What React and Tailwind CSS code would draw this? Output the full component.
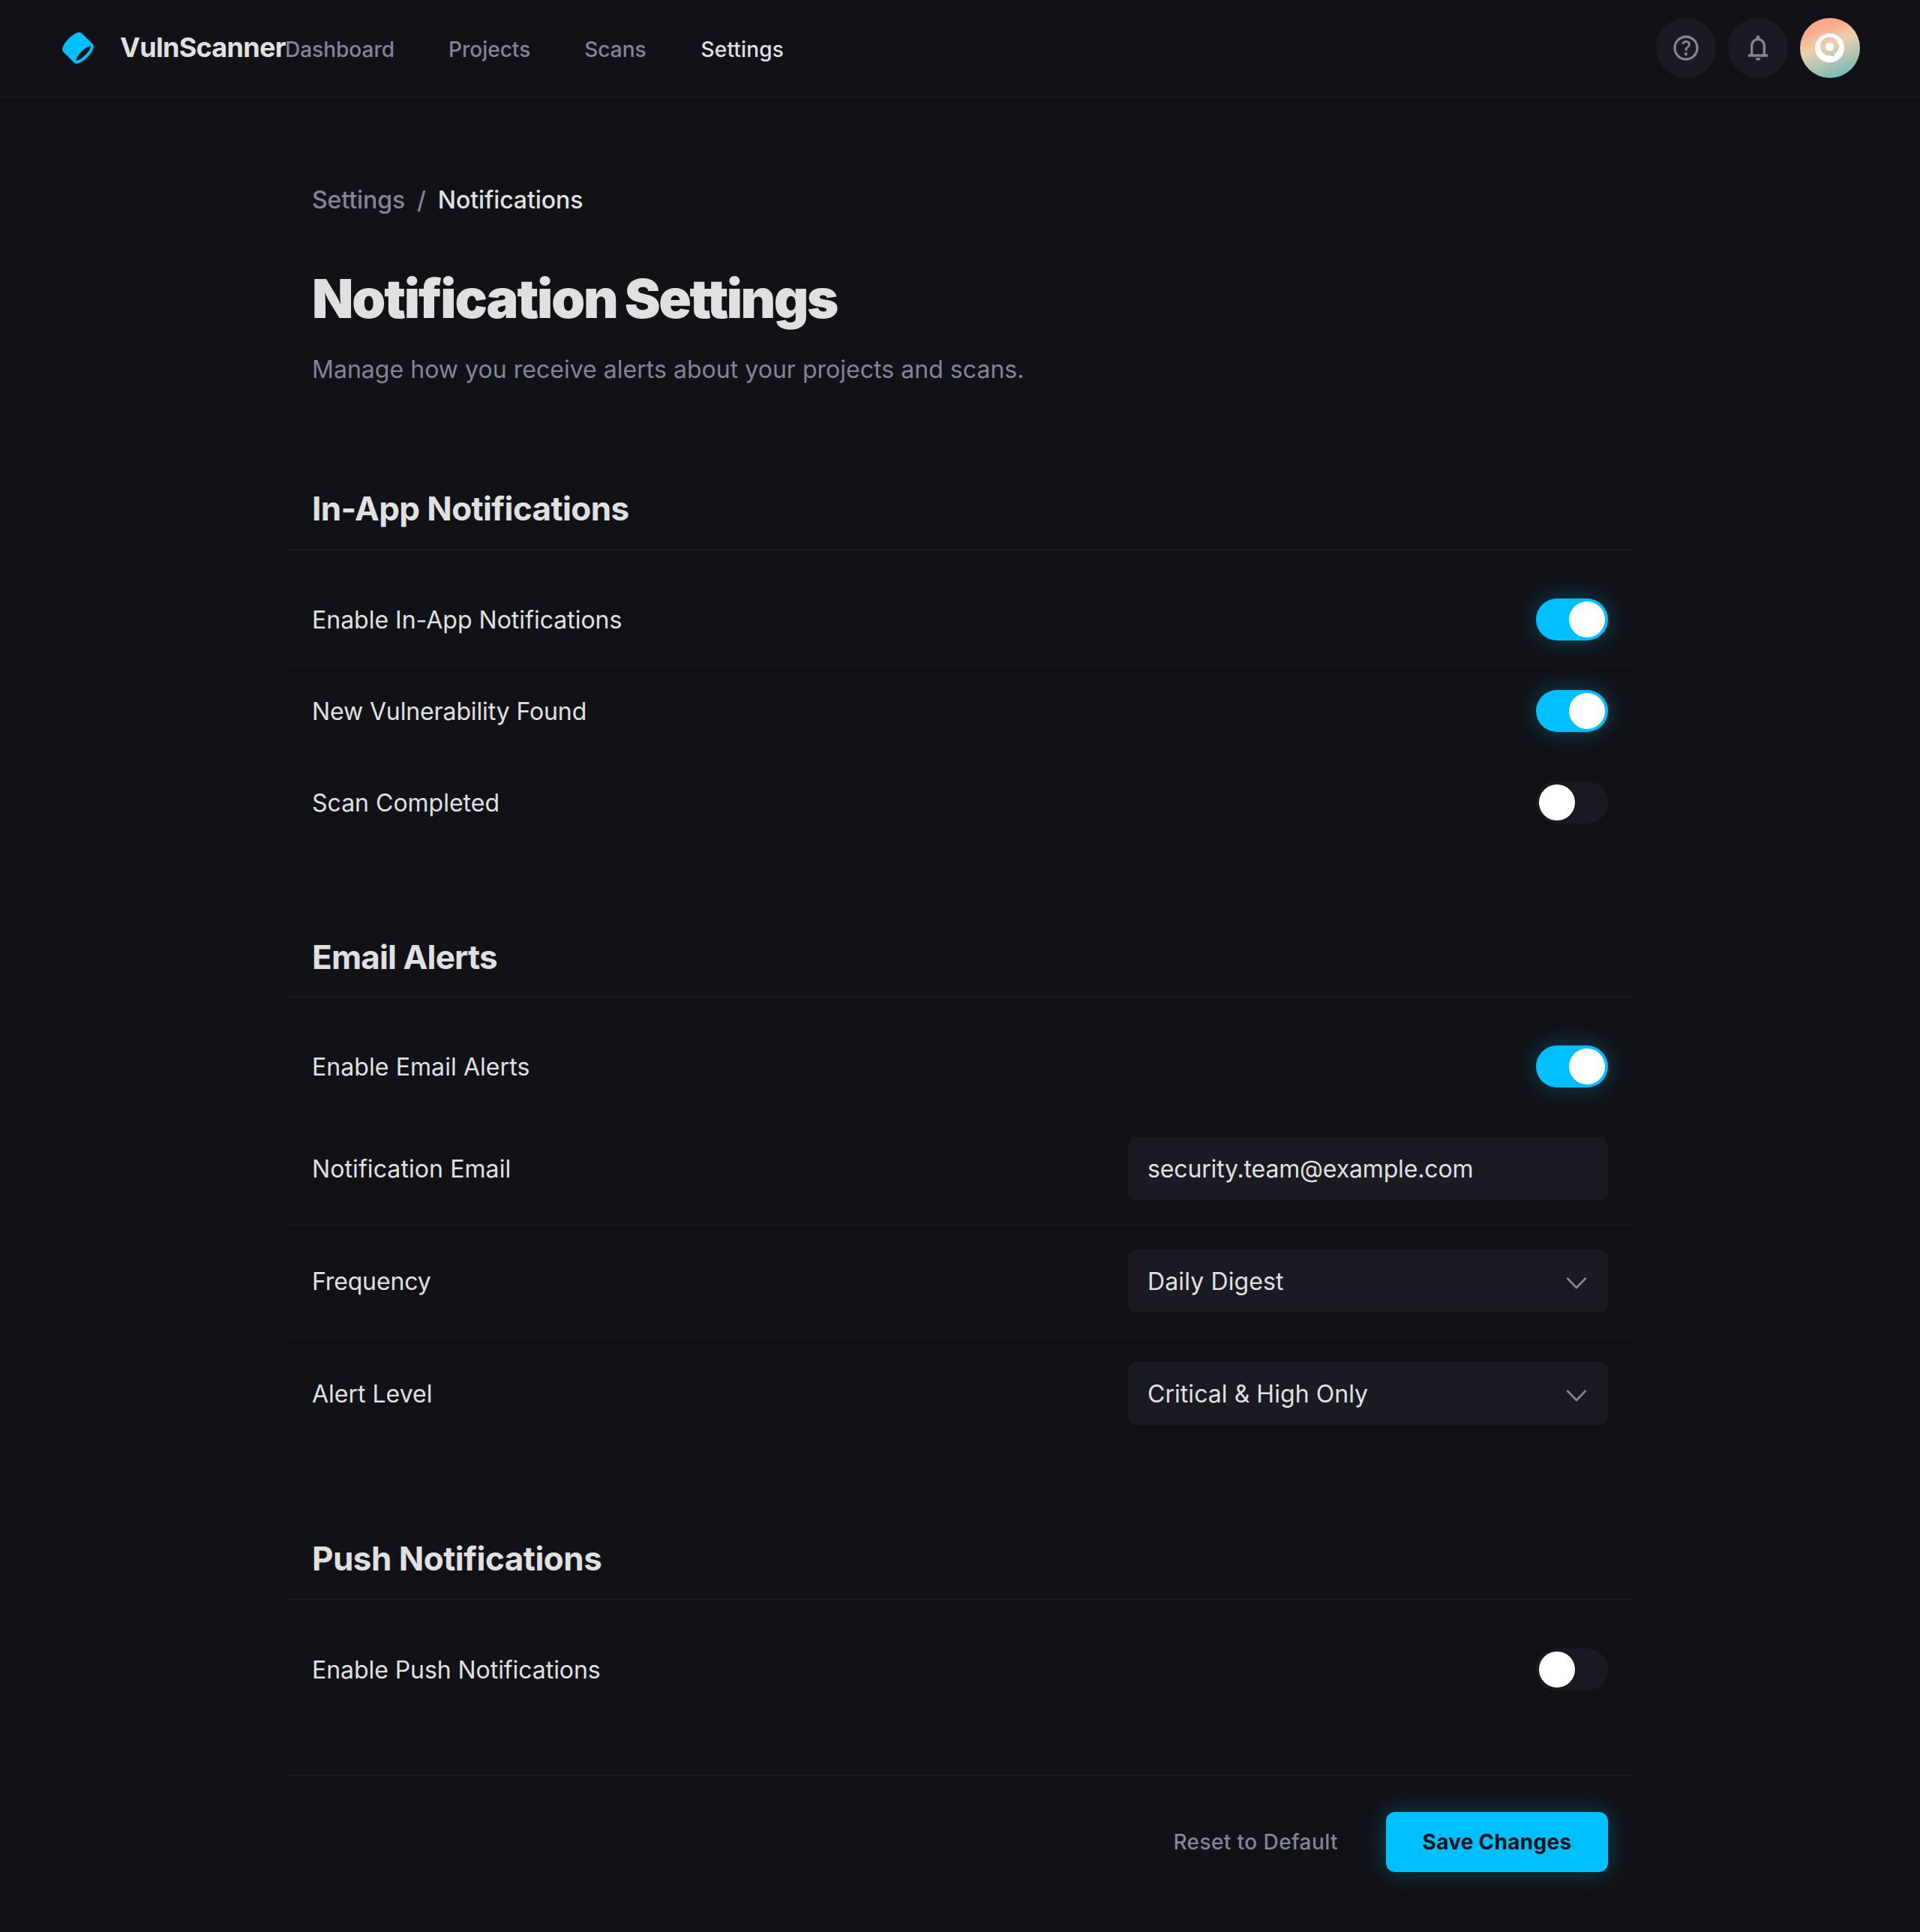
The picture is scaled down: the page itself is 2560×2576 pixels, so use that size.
const NAV = ['Dashboard', 'Projects', 'Scans', 'Settings'];

function Logo() {
  return (
    <svg viewBox="0 0 48 48" className="size-12 shrink-0 text-[#00bfff]" fill="none">
      <path
        fill="currentColor"
        fillRule="evenodd"
        clipRule="evenodd"
        d="M39.475 21.6262C40.358 21.4363 40.6863 21.5589 40.7581 21.5934C40.7876 21.655 40.8547 21.857 40.8082 22.3336C40.7408 23.0255 40.4502 24.0046 39.8572 25.2301C38.6799 27.6631 36.5085 30.6631 33.5858 33.5858C30.6631 36.5085 27.6632 38.6799 25.2301 39.8572C24.0046 40.4502 23.0255 40.7407 22.3336 40.8082C21.8571 40.8547 21.6551 40.7875 21.5934 40.7581C21.5589 40.6863 21.4363 40.358 21.6262 39.475C21.8562 38.4054 22.4689 36.9657 23.5038 35.2817C24.7575 33.2417 26.5497 30.9744 28.7621 28.762C30.9744 26.5497 33.2417 24.7574 35.2817 23.5037C36.9657 22.4689 38.4054 21.8562 39.475 21.6262ZM4.41189 29.2403L18.7597 43.5881C19.8813 44.7097 21.4027 44.9179 22.7217 44.7893C24.0585 44.659 25.5148 44.1631 26.9723 43.4579C29.9052 42.0387 33.2618 39.5667 36.4142 36.4142C39.5667 33.2618 42.0387 29.9052 43.4579 26.9723C44.1631 25.5148 44.659 24.0585 44.7893 22.7217C44.9179 21.4027 44.7097 19.8813 43.5881 18.7597L29.2403 4.41187C27.8527 3.02428 25.8765 3.02573 24.2861 3.36776C22.6081 3.72863 20.7334 4.58419 18.8396 5.74801C16.4978 7.18716 13.9881 9.18353 11.5858 11.5858C9.18354 13.988 7.18717 16.4978 5.74802 18.8396C4.58421 20.7334 3.72865 22.6081 3.36778 24.2861C3.02574 25.8765 3.02429 27.8527 4.41189 29.2403Z"
      />
    </svg>
  );
}

function HelpIcon() {
  return (
    <svg viewBox="0 -960 960 960" className="size-10" fill="currentColor">
      <path d="M478-240q21 0 35.5-14.5T528-290q0-21-14.5-35.5T478-340q-21 0-35.5 14.5T428-290q0 21 14.5 35.5T478-240Zm-36-154h74q0-33 7.5-52t42.5-52q26-26 41-49.5t15-56.5q0-56-41-86t-97-30q-57 0-92.5 30T342-618l66 26q5-18 22.5-39t53.5-21q32 0 48 17.5t16 38.5q0 20-12 37.5T506-526q-44 39-54 59t-10 73Zm38 314q-83 0-156-31.5T197-197q-54-54-85.5-127T80-480q0-83 31.5-156T197-763q54-54 127-85.5T480-880q83 0 156 31.5T763-763q54 54 85.5 127T880-480q0 83-31.5 156T763-197q-54 54-127 85.5T480-80Zm0-80q134 0 227-93t93-227q0-134-93-227t-227-93q-134 0-227 93t-93 227q0 134 93 227t227 93Z" />
    </svg>
  );
}

function BellIcon() {
  return (
    <svg viewBox="0 -960 960 960" className="size-10" fill="currentColor">
      <path d="M160-200v-80h80v-280q0-83 50-147.5T420-792v-28q0-25 17.5-42.5T480-880q25 0 42.5 17.5T540-820v28q80 20 130 84.5T720-560v280h80v80H160Zm320 120q-33 0-56.5-23.5T400-160h160q0 33-23.5 56.5T480-80ZM320-280h320v-280q0-66-47-113t-113-47q-66 0-113 47t-47 113v280Z" />
    </svg>
  );
}

function Avatar() {
  return (
    <div className="flex size-20 items-center justify-center rounded-full bg-linear-[160deg] from-[#fba98c] from-22% via-[#ecd1b0] via-45% to-[#70b8b8] to-92%">
      <svg viewBox="0 0 80 80" className="size-20">
        <mask id="ring">
          <rect width="80" height="80" fill="#fff" />
          <circle cx="39.3" cy="37.8" r="12.3" fill="#000" />
          <circle cx="50" cy="37.8" r="2.4" fill="#000" />
          <circle cx="43.5" cy="48.4" r="2.7" fill="#000" />
        </mask>
        <circle cx="39.6" cy="40" r="19.5" fill="#fff" mask="url(#ring)" />
        <circle cx="39.6" cy="38.2" r="5.8" fill="#fff" />
      </svg>
    </div>
  );
}

function Toggle({ on }) {
  return (
    <button
      className={
        on
          ? 'flex h-14 w-24 items-center justify-end rounded-full bg-[#00bfff] p-1 shadow-[0_0_30px_rgba(0,191,255,0.3)]'
          : 'flex h-14 w-24 items-center justify-start rounded-full bg-[#1a1a22] p-1'
      }
    >
      <span className="size-12 rounded-full bg-white" />
    </button>
  );
}

function Field({ children, select, className = '' }) {
  return (
    <div className="flex h-21 w-160 items-center justify-between rounded-xl bg-[#1a1a22] pr-6 pl-[26px] text-[32px]">
      <span className={`pt-0.5 ${className}`}>{children}</span>
      {select && (
        <svg viewBox="0 0 36 36" className="size-9 text-[#858396]" fill="none" stroke="currentColor" strokeWidth="2.8" strokeLinecap="round" strokeLinejoin="round">
          <path d="M6.2 14.8L18 27L29.8 14.8" />
        </svg>
      )}
    </div>
  );
}

function Row({ label, labelClass = '', children }) {
  return (
    <div className="flex items-center justify-between border-b-2 border-[#15161b] px-8 py-8 last:border-b-0">
      <span className={`pt-0.5 text-[32px] leading-12 ${labelClass}`}>{label}</span>
      {children}
    </div>
  );
}

function Section({ title, className, titleClass, children }) {
  return (
    <section className={className}>
      <h2 className={`border-b-2 border-[#1a1b20] px-8 text-[44px] leading-[55px] font-bold ${titleClass}`}>{title}</h2>
      <div className="pt-8">{children}</div>
    </section>
  );
}

export default function App() {
  return (
    <div className="min-h-[2576px] bg-[#111217] font-['Inter',sans-serif] text-[#e0e0e0]">
      <header className="flex h-[130px] items-center justify-between border-b-2 border-[#15161b] bg-[#121117] px-20">
        <div className="flex items-center">
          <div className="flex w-75 items-center gap-8">
            <Logo />
            <span className="pb-0.5 text-[36px] leading-[45px] font-bold tracking-[-0.7px]">VulnScanner</span>
          </div>
          <nav className="flex gap-18 pt-1 text-[28px] leading-[42px] font-medium text-[#858396]">
            {NAV.map((n) => (
              <a key={n} className={n === 'Settings' ? 'pl-px tracking-[0.15px] text-[#e0e0e0]' : ''}>
                {n}
              </a>
            ))}
          </nav>
        </div>
        <div className="flex gap-4 text-[#858396]">
          <button className="flex size-20 items-center justify-center rounded-full bg-[#1a1a22]">
            <HelpIcon />
          </button>
          <button className="flex size-20 items-center justify-center rounded-full bg-[#1a1a22]">
            <BellIcon />
          </button>
          <Avatar />
        </div>
      </header>

      <main className="mx-auto w-[1792px]">
        <div className="flex gap-4 px-8 pt-[113px] text-[32px] leading-12 font-medium tracking-[-0.08px]">
          <span className="text-[#858396]">Settings</span>
          <span className="text-[#858396]">/</span>
          <span>Notifications</span>
        </div>
        <div className="px-8 pt-[62px]">
          <h1 className="text-[72px] leading-[90px] font-black tracking-[-2.5px] [word-spacing:-1.8px]">
            <span className="tracking-[-2.12px]">Notification</span> Settings
          </h1>
          <p className="pt-[26px] text-[32px] leading-12 tracking-[0.03px] text-[#858396]">
            Manage how you receive alerts about your projects and scans.
          </p>
        </div>

        <Section title="In-App Notifications" className="pt-[134px]" titleClass="pb-[26px] tracking-[-0.62px]">
          <Row label="Enable In-App Notifications"><Toggle on /></Row>
          <Row label="New Vulnerability Found" labelClass="tracking-[-0.12px]"><Toggle on /></Row>
          <Row label="Scan Completed"><Toggle /></Row>
        </Section>
        <Section title="Email Alerts" className="pt-[119px]" titleClass="pb-6 tracking-[-0.85px]">
          <Row label="Enable Email Alerts" labelClass="tracking-[0.08px]"><Toggle on /></Row>
          <Row label="Notification Email" labelClass="tracking-[0.09px]"><Field className="tracking-[-0.15px]">security.team@example.com</Field></Row>
          <Row label="Frequency" labelClass="tracking-[-0.15px]"><Field select className="tracking-[0.12px]">Daily Digest</Field></Row>
          <Row label="Alert Level"><Field select className="tracking-[0.05px]">Critical &amp; High Only</Field></Row>
        </Section>
        <Section title="Push Notifications" className="pt-[119px]" titleClass="pb-[26px] tracking-[-0.52px]">
          <Row label="Enable Push Notifications" labelClass="tracking-[-0.06px]"><Toggle /></Row>
        </Section>

        <footer className="mt-20 flex justify-end gap-4 border-t-2 border-[#1a1b20] px-8 py-12 text-[28px] tracking-[0.42px]">
          <button className="h-20 px-12 font-medium text-[#858396]">Reset to Default</button>
          <button className="h-20 w-[296px] rounded-xl bg-[#00bfff] font-bold tracking-[0.28px] text-[#111217] shadow-[0_0_30px_rgba(0,191,255,0.3)]">
            Save Changes
          </button>
        </footer>
      </main>
    </div>
  );
}
